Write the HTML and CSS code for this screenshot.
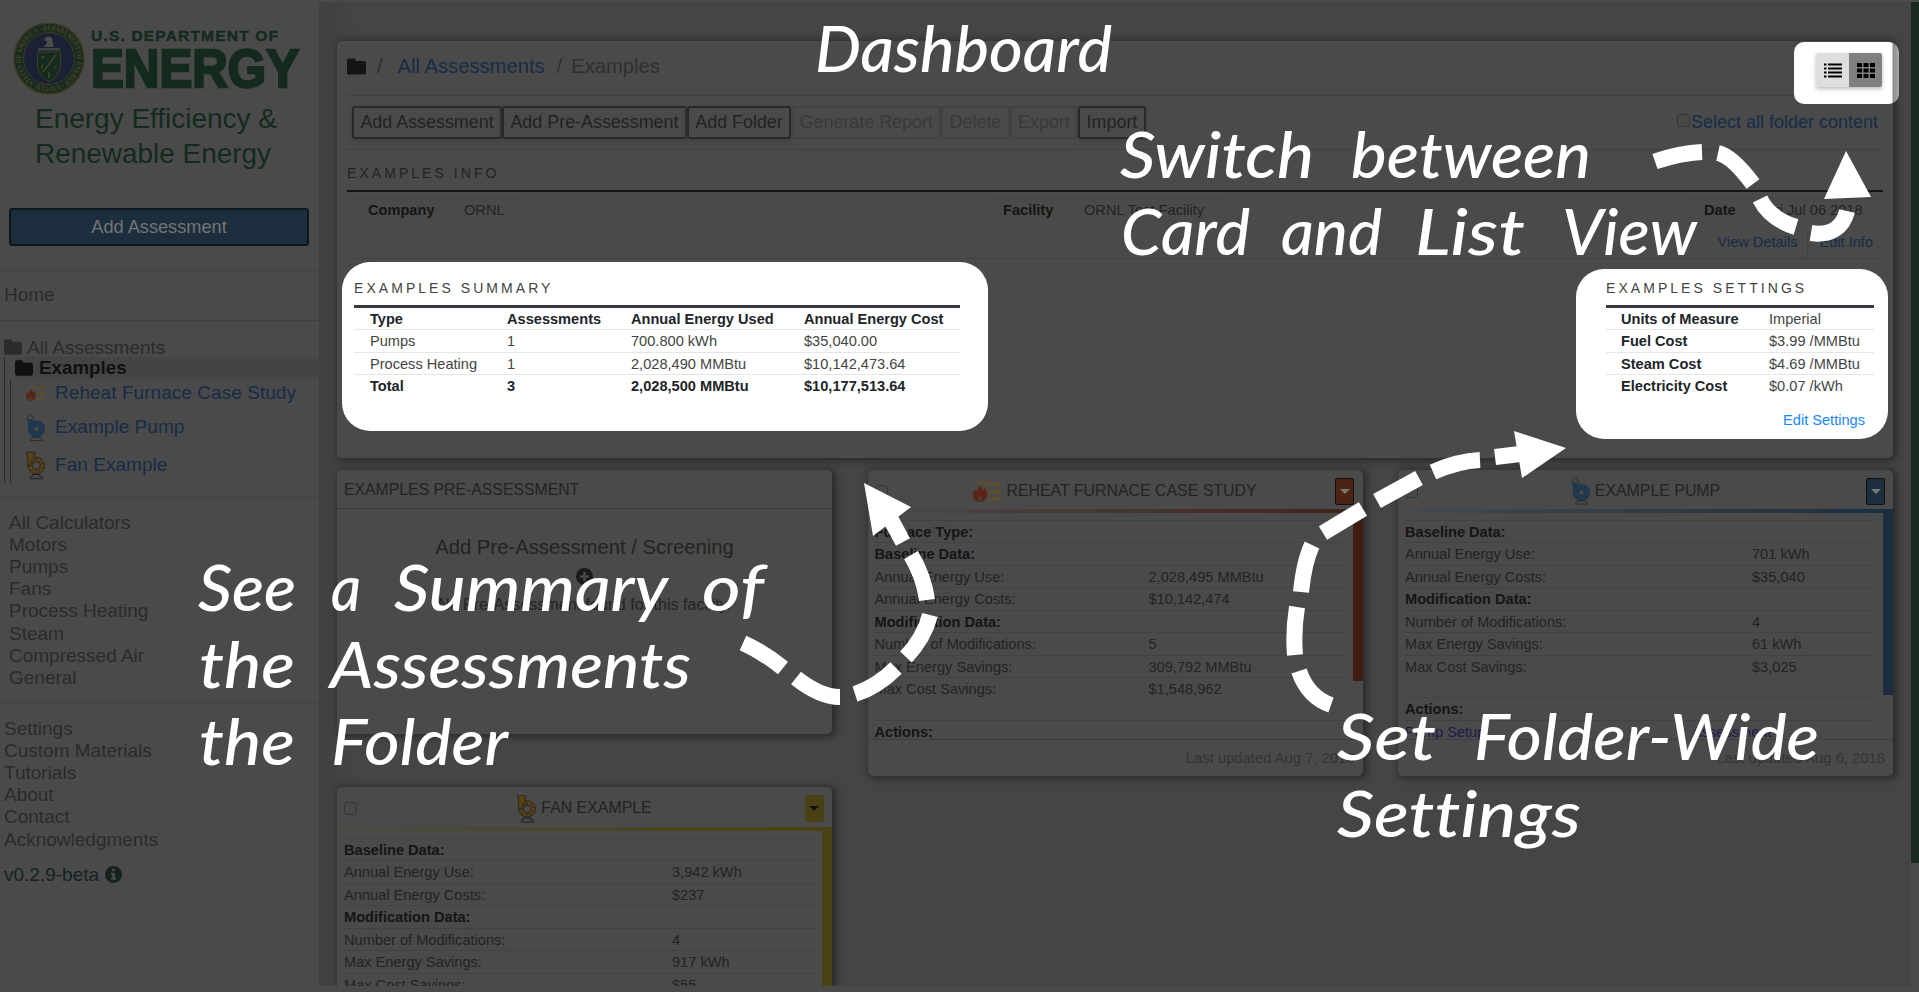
FILE: index.html
```html
<!DOCTYPE html>
<html lang="en">
<head>
<meta charset="utf-8">
<title>Dashboard</title>
<link rel="stylesheet" href="styles.css">
</head>
<body>
<svg class="defs" width="0" height="0">
  <defs>
    <symbol id="folder" viewBox="0 0 20 17"><path d="M2 0h5q2 0 2 2v.6h9q2 0 2 2V15q0 2-2 2H2q-2 0-2-2V2q0-2 2-2z"/></symbol>
    <symbol id="furnace" viewBox="0 0 28 21">
      <g fill="none" stroke="#6b5118" stroke-width="1.600"><path d="M5 2.500q4-2.500 9 0t12 0M15 10.500q3 2 6 0h5M15 18q3 2 6 0h5"/></g>
      <path fill="#6b5118" d="M25 0l3 2.500-3 2.500zM25 7.800l3 2.600-3 2.600zM25 15.500l3 2.500-3 2.500z"/>
      <path fill="#5b2415" d="M8 4c0 3 1.500 4 2 5 1-.6 1.500-1.500 1.500-2.500C14 9 14 11.500 14 13.500 14 18 11 21 7 21S0 18 0 14c0-2.500 1-4.500 2.500-6 .2 1.500.6 2.300 1.500 3C4 8.500 5.500 6 8 4z"/>
      <path fill="#4a403c" d="M7 15c1.500 1.500 2 2.200 2 3s-1 1.800-2 1.800-2-1-2-1.800.5-1.500 2-3z"/>
    </symbol>
    <symbol id="pump" viewBox="0 0 20 29">
      <path fill="#4e4e4e" stroke="#2b2b2b" stroke-width=".8" d="M1 6V3.500h2V.6h3v2.900h2V6z"/>
      <path fill="#1f3a50" d="M1.500 6h5.500v11H2.500z"/>
      <circle cx="11" cy="16" r="8.700" fill="#1f3a50" stroke="#26333c" stroke-width=".6"/>
      <circle cx="11" cy="16" r="2.800" fill="#4a4a4a" stroke="#26333c" stroke-width=".8"/>
      <path fill="#4a4a4a" stroke="#2c2828" stroke-width=".9" d="M7 25h8l2.500 3.300h-13z"/>
    </symbol>
    <symbol id="fan" viewBox="0 0 20 29">
      <circle cx="10.700" cy="14.500" r="8.700" fill="#5a4217" stroke="#2a241a" stroke-width=".9"/>
      <path fill="#5a4217" stroke="#2a241a" stroke-width=".9" d="M.5.5h9v2.300H8.300v4.500L2.500 16 1.800 14V2.800H.5z"/>
      <path fill="none" stroke="#2a241a" stroke-width=".8" d="M10.700 6.500v4M15.500 8.500l-2 3M18.500 12l-4 1.500M18.500 17.500l-4-1.500M15 22l-2-4M10 23l.5-4M4.500 20l3-3M3 14.500h4M5 9l3 2.500"/>
      <circle cx="10.700" cy="14.500" r="4" fill="#4a4a4a" stroke="#222" stroke-width=".9"/>
      <path fill="#4a4a4a" stroke="#1d1d1d" stroke-width=".9" d="M7 24h7.500v2h2.500v2.400H4.500V26H7z"/>
    </symbol>
  </defs>
</svg>

<div class="app">
  <aside class="sidebar">
    <svg class="logo" width="319" height="180" viewBox="0 0 319 180">
      <ellipse cx="49" cy="58.500" rx="35" ry="35.500" fill="#182a21" stroke="#3f3d20" stroke-width="1.500"/>
      <ellipse cx="49" cy="58.500" rx="25.500" ry="26" fill="#1b2035" stroke="#3f3d20"/>
      <path id="ring" fill="none" d="M34 82A28 28 0 1 1 64 82A28 28 0 0 1 34 82"/>
      <text class="seal-text"><textPath href="#ring" textLength="172" lengthAdjust="spacingAndGlyphs">STATES OF AMERICA · DEPARTMENT OF ENERGY · UNITED</textPath></text>
      <path d="M44 40q2-4 6-3 3 1 2.500 5l1.500 5H44l3.500-5z" fill="#4d4d4d"/>
      <path d="M38 48h22v2.500H38z" fill="#3d4544"/>
      <path d="M37.500 52h23v15q-2 10-11.500 15-9.500-5-11.500-15z" fill="#162b20" stroke="#3f3d20"/>
      <path d="M43 72l13-17M49 72v6M41.500 57h3M54 67h3M42 64v4" stroke="#4a4722" stroke-width="1.300"/>
      <g class="brand">
        <text class="brand-top" x="91" y="41" font-size="15.500" textLength="187">U.S. DEPARTMENT OF</text>
        <text class="brand-name" x="91" y="86.500" font-size="54" textLength="208" lengthAdjust="spacingAndGlyphs">ENERGY</text>
      </g>
      <g class="office">
        <text x="35" y="128" textLength="242">Energy Efficiency &amp;</text>
        <text x="35" y="163" textLength="236">Renewable Energy</text>
      </g>
    </svg>
    <button class="side-add">Add Assessment</button>
    <div class="side-home">Home</div>
    <div class="tree">
      <div class="tree-root"><svg width="18" height="16"><use href="#folder"/></svg>All Assessments</div>
      <div class="tree-l1">
        <div class="tree-current"><svg width="18" height="16"><use href="#folder"/></svg>Examples</div>
        <div class="tree-l2">
          <div class="leaf"><svg width="19" height="15"><use href="#furnace"/></svg>Reheat Furnace Case Study</div>
          <div class="leaf leaf-pump"><svg width="19" height="29"><use href="#pump"/></svg>Example Pump</div>
          <div class="leaf leaf-fan"><svg width="19" height="29"><use href="#fan"/></svg>Fan Example</div>
        </div>
      </div>
    </div>
    <nav class="calcs"><span>All Calculators</span><span>Motors</span><span>Pumps</span><span>Fans</span><span>Process Heating</span><span>Steam</span><span>Compressed Air</span><span>General</span></nav>
    <nav class="links"><span>Settings</span><span>Custom Materials</span><span>Tutorials</span><span>About</span><span>Contact</span><span>Acknowledgments</span></nav>
    <div class="version">v0.2.9-beta
      <svg width="17" height="17" viewBox="0 0 17 17"><circle cx="8.500" cy="8.500" r="8.500" fill="#152220"/><path fill="#4a4a4a" d="M7 2.800h3v2.500H7zM6 6.700h4v5h1.200v2H6v-2h1.200v-3H6z"/></svg>
    </div>
  </aside>

  <main class="main">
    <section class="panel summary-panel">
      <div class="crumbs">
        <svg width="19" height="17"><use href="#folder"/></svg><span class="slash">/</span><a>All Assessments</a><span class="slash s2">/</span><span>Examples</span>
      </div>
      <div class="toolbar">
        <button>Add Assessment</button><button>Add Pre-Assessment</button><button>Add Folder</button><button class="off">Generate Report</button><button class="off">Delete</button><button class="off">Export</button><button>Import</button>
        <label><i class="check"></i>Select all folder content</label>
      </div>
      <h3 class="title">EXAMPLES INFO</h3>
      <div class="info">
        <div class="pair company"><b>Company</b><span>ORNL</span></div>
        <div class="pair facility"><b>Facility</b><span>ORNL Test Facility</span></div>
        <div class="pair date"><b>Date</b><span>Fri Jul 06 2018</span></div>
      </div>
      <div class="info-links"><a>View Details</a><a>Edit Info</a></div>
    </section>

    <div class="cards">
      <section class="panel pre">
        <header>EXAMPLES PRE-ASSESSMENT</header>
        <div class="pre-body">
          <div class="pre-title">Add Pre-Assessment / Screening</div>
          <svg width="17" height="17" viewBox="0 0 17 17"><circle cx="8.500" cy="8.500" r="8.500" fill="#191919"/><path d="M8.500 4v9M4 8.500h9" stroke="#4a4a4a" stroke-width="2.500"/></svg>
          <div class="pre-note">No Pre-Assessment found for this facility.</div>
        </div>
      </section>

      <section class="panel card furnace">
        <header><i class="check"></i><div class="name"><svg width="28" height="21"><use href="#furnace"/></svg><span>REHEAT FURNACE CASE STUDY</span></div><button class="drop"></button></header>
        <div class="body"><div class="rows">
          <div class="row"><b>Furnace Type:</b></div>
          <div class="row"><b>Baseline Data:</b></div>
          <div class="row"><span>Annual Energy Use:</span><span>2,028,495 MMBtu</span></div>
          <div class="row"><span>Annual Energy Costs:</span><span>$10,142,474</span></div>
          <div class="row"><b>Modification Data:</b></div>
          <div class="row"><span>Number of Modifications:</span><span>5</span></div>
          <div class="row"><span>Max Energy Savings:</span><span>309,792 MMBtu</span></div>
          <div class="row"><span>Max Cost Savings:</span><span>$1,548,962</span></div>
          <div class="row actions"><b>Actions:</b></div>
        </div><div class="thumb"></div></div>
        <footer>Last updated Aug 7, 2018</footer>
      </section>

      <section class="panel card pump">
        <header><i class="check"></i><div class="name"><svg width="19" height="28"><use href="#pump"/></svg><span>EXAMPLE PUMP</span></div><button class="drop"></button></header>
        <div class="body"><div class="rows">
          <div class="row"><b>Baseline Data:</b></div>
          <div class="row"><span>Annual Energy Use:</span><span>701 kWh</span></div>
          <div class="row"><span>Annual Energy Costs:</span><span>$35,040</span></div>
          <div class="row"><b>Modification Data:</b></div>
          <div class="row"><span>Number of Modifications:</span><span>4</span></div>
          <div class="row"><span>Max Energy Savings:</span><span>61 kWh</span></div>
          <div class="row"><span>Max Cost Savings:</span><span>$3,025</span></div>
          <div class="row actions"><b>Actions:</b></div>
          <div class="row visited"><span>Pump Setup</span><span>Assessment</span></div>
        </div><div class="thumb"></div></div>
        <footer>Last updated Aug 6, 2018</footer>
      </section>

      <section class="panel card fan">
        <header><i class="check"></i><div class="name"><svg width="19" height="28"><use href="#fan"/></svg><span>FAN EXAMPLE</span></div><button class="drop"></button></header>
        <div class="body"><div class="rows">
          <div class="row"><b>Baseline Data:</b></div>
          <div class="row"><span>Annual Energy Use:</span><span>3,942 kWh</span></div>
          <div class="row"><span>Annual Energy Costs:</span><span>$237</span></div>
          <div class="row"><b>Modification Data:</b></div>
          <div class="row"><span>Number of Modifications:</span><span>4</span></div>
          <div class="row"><span>Max Energy Savings:</span><span>917 kWh</span></div>
          <div class="row"><span>Max Cost Savings:</span><span>$55</span></div>
        </div><div class="thumb"></div></div>
      </section>
    </div>
  </main>
  <div class="track"></div>
</div>

<section class="spot spot-summary">
  <h3 class="title">EXAMPLES SUMMARY</h3>
  <div class="grid4 head"><b>Type</b><b>Assessments</b><b>Annual Energy Used</b><b>Annual Energy Cost</b></div>
  <div class="grid4"><span>Pumps</span><span>1</span><span>700.800 kWh</span><span>$35,040.00</span></div>
  <div class="grid4"><span>Process Heating</span><span>1</span><span>2,028,490 MMBtu</span><span>$10,142,473.64</span></div>
  <div class="grid4"><b>Total</b><b>3</b><b>2,028,500 MMBtu</b><b>$10,177,513.64</b></div>
</section>

<section class="spot spot-settings">
  <h3 class="title">EXAMPLES SETTINGS</h3>
  <div class="grid2 head"><b>Units of Measure</b><span>Imperial</span></div>
  <div class="grid2"><b>Fuel Cost</b><span>$3.99 /MMBtu</span></div>
  <div class="grid2"><b>Steam Cost</b><span>$4.69 /MMBtu</span></div>
  <div class="grid2"><b>Electricity Cost</b><span>$0.07 /kWh</span></div>
  <a>Edit Settings</a>
</section>

<section class="spot spot-view">
  <div class="toggle">
    <div class="list"><svg width="18" height="15" viewBox="0 0 18 15"><path d="M0 1.500h2.500M4 1.500h14M0 5.500h2.500M4 5.500h14M0 9.500h2.500M4 9.500h14M0 13.500h2.500M4 13.500h14" stroke="#000" stroke-width="2"/></svg></div>
    <div class="tiles"><svg width="18" height="15" viewBox="0 0 18 15"><g stroke="#000" stroke-width="4"><path d="M0 2h18M0 7.500h18M0 13h18" stroke-dasharray="5 1.500"/></g></svg></div>
  </div>
</section>

<svg class="notes" width="1919" height="992" viewBox="0 0 1919 992">
  <g class="words">
    <text x="815" y="72" textLength="297" lengthAdjust="spacingAndGlyphs">Dashboard</text>
    <text x="1120" y="178" textLength="194" lengthAdjust="spacingAndGlyphs">Switch</text>
    <text x="1351" y="178" textLength="240" lengthAdjust="spacingAndGlyphs">between</text>
    <text x="1121" y="255" textLength="129" lengthAdjust="spacingAndGlyphs">Card</text>
    <text x="1281" y="255" textLength="101" lengthAdjust="spacingAndGlyphs">and</text>
    <text x="1415" y="255" textLength="110" lengthAdjust="spacingAndGlyphs">List</text>
    <text x="1562" y="255" textLength="135" lengthAdjust="spacingAndGlyphs">View</text>
    <text x="198" y="611" textLength="98" lengthAdjust="spacingAndGlyphs">See</text>
    <text x="331" y="611" textLength="30" lengthAdjust="spacingAndGlyphs">a</text>
    <text x="394" y="611" textLength="274" lengthAdjust="spacingAndGlyphs">Summary</text>
    <text x="702" y="611" textLength="62" lengthAdjust="spacingAndGlyphs">of</text>
    <text x="199" y="688" textLength="96" lengthAdjust="spacingAndGlyphs">the</text>
    <text x="330" y="688" textLength="361" lengthAdjust="spacingAndGlyphs">Assessments</text>
    <text x="199" y="765" textLength="96" lengthAdjust="spacingAndGlyphs">the</text>
    <text x="331" y="765" textLength="177" lengthAdjust="spacingAndGlyphs">Folder</text>
    <text x="1337" y="760" textLength="99" lengthAdjust="spacingAndGlyphs">Set</text>
    <text x="1474" y="760" textLength="345" lengthAdjust="spacingAndGlyphs">Folder-Wide</text>
    <text x="1337" y="837" textLength="244" lengthAdjust="spacingAndGlyphs">Settings</text>
  </g>
  <g class="dashes">
    <path d="M1655 161.500Q1680 153 1702 152M1718 153Q1732 156 1753 184M1760 199Q1770 219 1796 227M1811 233C1830 236 1843 228 1847 211"/>
    <path d="M743 643Q763 652 783 668M796 678Q820 697 840 697M855 694Q877 687 896 668M906 657Q924 638 930 615M927 600Q924 577 911 555M903 542L890 518"/>
    <path d="M1331 705Q1308 697 1299 671M1295 655Q1293 632 1297 607M1301 592Q1304 562 1312 545M1323 533L1363 509M1377 501L1419 478M1433 472Q1458 461 1480 460M1495 457L1520 454"/>
  </g>
  <path fill="#fff" d="M1846 151L1871 197 1824 199zM864 483L911 507 873 536zM1566 448L1514 431 1522 478z"/>
</svg>
</body>
</html>
```

FILE: styles.css
```css
* { box-sizing: border-box; }
html, body { margin: 0; overflow: hidden; }
body {
  position: relative;
  width: 1919px;
  height: 992px;
  background: #4a4a4a;
  color: #232323;
  font: 14.6px/22.5px "Liberation Sans", Arial, sans-serif;
}
.defs { position: absolute; }
button { font: inherit; padding: 0; margin: 0; background: none; }
b { color: #151515; }
a { color: #172c47; }

.app { display: flex; height: 986px; }

/* Sidebar */
.sidebar { width: 319px; flex: none; font-size: 19px; line-height: 22.2px; color: #2b2b2b; }
.logo { display: block; }
.brand { fill: #142a1f; font-weight: bold; }
.brand-top { stroke: #142a1f; stroke-width: .4px; }
.brand-name { stroke: #142a1f; stroke-width: 2.500px; }
.office { fill: #142a1f; font-size: 28px; }
.seal-text { font: bold 7.500px "Liberation Serif", serif; fill: #4a4722; }
.side-add {
  display: block;
  width: 300px;
  height: 38px;
  margin: 28px 0 24px 9px;
  border: 2px solid #10171e;
  border-radius: 3px;
  background: #1c2e3d;
  color: #747474;
  font-size: 18.200px;
}
.side-home { height: 50px; padding: 13px 4px; border-top: 1px dotted #393939; }
.tree { height: 177px; padding: 21px 0 0 4px; border-top: 1px dotted #393939; }
.tree svg { fill: currentColor; flex: none; }
.tree-root { display: flex; align-items: flex-start; gap: 5px; height: 15px; line-height: 22px; }
.tree-root { margin-top: -5px; height: 20px; }
.tree-root svg { margin-top: 2px; }
.tree-l1 { border-left: 1px solid #2a2a2a; height: 126px; }
.tree-current {
  display: flex;
  align-items: center;
  gap: 6px;
  height: 22px;
  margin-left: 10px;
  background: #444;
  color: #111;
  font-size: 18.800px;
  font-weight: bold;
}
.tree-l2 { height: 104px; margin-left: 5px; border-left: 1px solid #2a2a2a; padding-left: 15px; color: #172c47; }
.leaf { display: flex; align-items: center; gap: 10px; height: 29px; letter-spacing: .05px; }
.leaf-pump { height: 39px; }
.leaf-fan { height: 36px; }
.calcs, .links { display: flex; flex-direction: column; border-top: 1px dotted #393939; }
.calcs { height: 205px; padding: 13.500px 9px 0; }
.links { height: 158px; padding: 14.500px 4px 0; }
.version { display: flex; gap: 6px; align-items: center; padding: 3.500px 4px; color: #152220; }

/* Main column */
.main {
  flex: 1;
  height: 984px;
  margin-top: 2px;
  padding: 39px 18px 0;
  overflow: hidden;
  background: linear-gradient(90deg, #404040, #454545 40px);
}
.track { width: 8px; height: 861px; margin-top: 2px; background: #18291f; }
.panel { background: #4a4a4a; border-radius: 5px; box-shadow: 2px 1px 7px 2px #2b2b2b; }
.summary-panel { width: 1556px; height: 417px; padding: 0 10px; }
.crumbs { display: flex; align-items: center; height: 55px; padding-bottom: 3px; border-bottom: 1px solid #414141; font-size: 20.200px; color: #2f2f2f; }
.crumbs svg { fill: #141414; margin-top: -1px; }
.slash { margin: 0 15px 0 11px; }
.slash.s2 { margin: 0 9px 0 12px; }
.toolbar { display: flex; align-items: center; height: 54px; padding: 0 5px; border-bottom: 1px solid #414141; font-size: 17.900px; }
.toolbar button {
  height: 33px;
  padding: 0 6.400px;
  border: 2px solid #292929;
  border-radius: 3px;
  box-shadow: 0 2px 4px #404040;
  color: #222;
}
.toolbar button.off { color: #393939; border-color: #424242; box-shadow: none; }
.toolbar label { display: flex; align-items: center; gap: 1px; margin-left: auto; color: #172c47; font-size: 18px; }
.toolbar .check { margin-top: -4px; }
.check { display: inline-block; width: 13px; height: 13px; border: 1px solid #363636; border-radius: 3px; background: #484848; }
.title { margin: 0; font-size: 14px; font-weight: normal; letter-spacing: 3.050px; line-height: 20px; }
.summary-panel .title { height: 42px; padding-top: 13px; border-bottom: 2px solid #161616; }
.info { display: flex; height: 37px; padding: 6px 5px 0; }
.pair { display: flex; height: 31px; border-top: 1px solid #424242; padding-left: 16px; }
.pair b { flex: none; }
.company { width: 168px; }
.company b { width: 96px; }
.facility { width: 240px; margin-left: 467px; }
.facility b { width: 81px; }
.date { width: 190px; margin-left: auto; }
.date b { width: 62px; }
.info-links { display: flex; justify-content: flex-end; height: 30px; padding: 2px 10px 0 0; border-bottom: 1px solid #424242; }
.info-links a + a { margin-left: 10px; padding-left: 11px; border-left: 1px solid #424242; }

/* Assessment cards */
.cards { display: grid; grid-template-columns: repeat(3, 495px); grid-template-rows: 306px 306px; column-gap: 35.500px; row-gap: 11px; margin-top: 12px; }
.pre { height: 264px; }
.pre header { height: 39px; padding: 9px 7px; border-bottom: 1px solid #3c3c3c; font-size: 15.800px; }
.pre-body { display: flex; flex-direction: column; align-items: center; padding-top: 26px; }
.pre-title { font-size: 20.300px; line-height: 24px; margin-bottom: 9px; }
.pre-note { margin-top: 3px; font-size: 16.100px; line-height: 32px; }
.card { display: flex; flex-direction: column; overflow: hidden; font-size: 14.600px; }
.card header { display: flex; align-items: center; justify-content: space-between; height: 39px; flex: none; padding: 3px 8px 0 7px; font-size: 15.900px; }
.name { display: flex; align-items: center; gap: 5px; height: 30px; padding-left: 7px; }
.drop { width: 19px; height: 27px; border: 1.500px solid #111; border-radius: 2px; display: flex; justify-content: center; padding-top: 10px; }
.drop::after { content: ""; border: 5px solid transparent; border-top-color: #777; border-bottom: 0; }
.card .body { position: relative; flex: 1; min-height: 0; padding: 6.500px 17px 0 7px; overflow: hidden; border-top: 4px solid; }
.thumb { position: absolute; right: 0; top: 0; width: 10px; }
.rows { position: relative; }
.row { display: grid; height: 22.500px; line-height: 22.500px; border-top: 1px solid #424242; }
.row.actions { margin-top: 20px; }
.card footer { height: 37px; flex: none; padding: 7px 8px 0; border-top: 1px solid #3e3e3e; text-align: right; color: #343434; font-size: 14.800px; }
.visited { color: #201a4b; }
.furnace .row { grid-template-columns: 274px 1fr; }
.furnace .body { border-image: linear-gradient(90deg, #4a4a4a, #402319) 1; }
.furnace .thumb { height: 168px; background: #3f1d12; }
.furnace .drop { background: #4d2413; }
.pump .row { grid-template-columns: 347px 1fr; }
.pump .row.visited { grid-template-columns: 287px 1fr; }
.pump .body { border-image: linear-gradient(90deg, #454a4e, #1c2e3d) 1; }
.pump .thumb { height: 182px; background: #1c2e3d; }
.pump .drop { background: #1c2e3d; }
.fan header { height: 40px; }
.fan .row { grid-template-columns: 328px 1fr; }
.fan .body { border-image: linear-gradient(90deg, #4a4a42, #4a4215) 1; }
.fan .thumb { height: 300px; background: #494114; }
.fan .drop { background: #494114; border-color: #494114; }
.fan .drop::after { border-top-color: #111; }

/* Highlighted regions above the dimmed page */
.spot { position: absolute; background: #fff; border-radius: 28px; color: #444; }
.spot b { color: #212529; }
.spot .title { height: 23px; color: #444; margin-bottom: 4px; }
.spot .head { border-top: 3px solid #343a40; height: 25px; }
.grid4, .grid2 { display: grid; height: 22.500px; border-bottom: 1px solid #e6e6e6; line-height: 22.500px; }
.grid4:last-of-type, .grid2:last-of-type { border-bottom: 0; }
.spot-summary { left: 342px; top: 262px; width: 646px; height: 169px; padding: 16px 28px 0 12px; }
.grid4 { grid-template-columns: 137px 124px 173px 1fr; padding-left: 16px; }
.spot-settings { left: 1576px; top: 269px; width: 312px; height: 170px; padding: 9px 14px 0 30px; }
.grid2 { grid-template-columns: 148px 1fr; padding-left: 15px; }
.spot-settings a { display: block; margin-top: 11px; padding-right: 9px; text-align: right; color: #1487ff; }
.spot-view { left: 1794px; top: 42px; width: 105px; height: 62px; padding: 11px 0 0 22px; border-radius: 10px; background: linear-gradient(90deg, #fff 98px, #8a8a8a 99px, #aaa); }
.toggle { display: flex; width: 66px; height: 34px; box-shadow: 0 2px 4px #bbb; border-radius: 2px; overflow: hidden; }
.toggle div { width: 33px; display: flex; align-items: center; justify-content: center; }
.list { background: #dedede; }
.tiles { background: #808080; }

/* Hand-written callouts and dashed arrows */
.notes { position: absolute; left: 0; top: 0; }
.words { fill: #fff; font: italic 500 63px Lato, sans-serif; font-variant-ligatures: none; }
.dashes { fill: none; stroke: #fff; stroke-width: 16px; }
```
